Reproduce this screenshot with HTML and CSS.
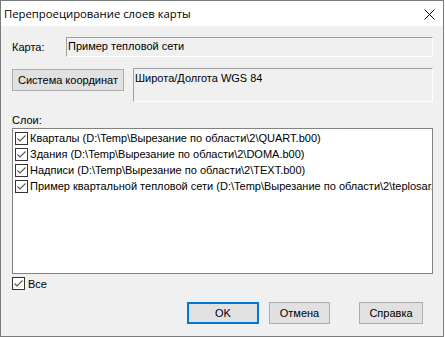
FILE: index.html
```html
<!DOCTYPE html>
<html lang="ru">
<head>
  <meta charset="UTF-8"/>
  <title>Перепроецирование слоев карты</title>
  <link rel="stylesheet" href="styles.css">
</head>
<body>
  <div class="win">
    <div class="titlebar">
      <span class="title">Перепроецирование слоев карты</span>
      <svg class="close" width="11" height="11" viewBox="0 0 11 11"><path d="M0.5 0.5L10.5 10.5M10.5 0.5L0.5 10.5" stroke="#000" stroke-width="1"/></svg>
    </div>
    <div class="content">
      <div class="row-map">
        <span class="lbl">Карта:</span>
        <div class="field">Пример тепловой сети</div>
      </div>
      <div class="row-cs">
        <button class="btn btn-cs">Система координат</button>
        <div class="field field-tall">Широта/Долгота WGS 84</div>
      </div>
      <div class="lbl-layers">Слои:</div>
      <div class="list">
        <div class="item"><span class="cb"><svg width="11" height="11" viewBox="0 0 11 11"><path d="M1.5 5.5L4 8L9.5 2.5" fill="none" stroke="#555" stroke-width="1.1"/></svg></span>Кварталы (D:\Temp\Вырезание по области\2\QUART.b00)</div>
        <div class="item"><span class="cb"><svg width="11" height="11" viewBox="0 0 11 11"><path d="M1.5 5.5L4 8L9.5 2.5" fill="none" stroke="#555" stroke-width="1.1"/></svg></span>Здания (D:\Temp\Вырезание по области\2\DOMA.b00)</div>
        <div class="item"><span class="cb"><svg width="11" height="11" viewBox="0 0 11 11"><path d="M1.5 5.5L4 8L9.5 2.5" fill="none" stroke="#555" stroke-width="1.1"/></svg></span>Надписи (D:\Temp\Вырезание по области\2\TEXT.b00)</div>
        <div class="item"><span class="cb"><svg width="11" height="11" viewBox="0 0 11 11"><path d="M1.5 5.5L4 8L9.5 2.5" fill="none" stroke="#555" stroke-width="1.1"/></svg></span>Пример квартальной тепловой сети (D:\Temp\Вырезание по области\2\teplosar.b00)</div>
      </div>
      <div class="all"><span class="cb"><svg width="11" height="11" viewBox="0 0 11 11"><path d="M1.5 5.5L4 8L9.5 2.5" fill="none" stroke="#555" stroke-width="1.1"/></svg></span>Все</div>
      <div class="buttons">
        <button class="btn btn-ok">OK</button>
        <button class="btn btn-cancel">Отмена</button>
        <button class="btn btn-help">Справка</button>
      </div>
    </div>
  </div>
</body>
</html>
```

FILE: styles.css
```css
body { margin:0; background:#fff; font-family:"Liberation Sans", Arial, sans-serif; font-size:11px; color:#000; }
.win { width:444px; height:337px; box-sizing:border-box; border:1px solid #7a7a7a; background:#f0f0f0; display:flex; flex-direction:column; }
.titlebar { height:25px; background:#fff; display:flex; align-items:center; justify-content:space-between; padding:0 8px 0 3px; flex-shrink:0; }
.title { font-family:"Open Sans", "Liberation Sans", sans-serif; font-size:11.3px; }
.close { margin-top:1px; }
.content { padding:0 10px 0 11px; display:flex; flex-direction:column; }
.row-map { display:flex; align-items:center; margin-top:11px; height:20px; }
.lbl { width:54px; }
.field { flex:1; box-sizing:border-box; height:20px; border:1px solid; border-color:#a0a0a0 #fff #fff #a0a0a0; padding:2px 0 0 1px; }
.row-cs { display:flex; align-items:flex-start; margin-top:11px; gap:9px; }
.field-tall { height:34px; padding-top:3px; }
.btn { font:inherit; color:#000; background:#e1e1e1; border:1px solid #adadad; height:22px; padding:0; box-sizing:border-box; }
.btn-cs { width:112px; margin-top:1px; }
.lbl-layers { margin-top:12px; height:14px; }
.list { box-sizing:border-box; height:146px; background:#fff; border:1px solid #828282; padding:1px 0 0 2px; overflow:hidden; white-space:nowrap; }
.item { height:16px; display:flex; align-items:center; }
.cb { width:13px; height:13px; box-sizing:border-box; border:1px solid #333; background:#fff; display:inline-flex; align-items:center; justify-content:center; margin-right:2px; flex-shrink:0; }
.all { display:flex; align-items:center; margin-top:3px; height:13px; }
.all .cb { margin-right:3px; }
.buttons { display:flex; justify-content:flex-end; margin-top:12px; padding-right:10px; }
.btn-ok { width:72px; border:2px solid #0078d7; }
.btn-cancel { width:61px; margin-left:10px; }
.btn-help { width:64px; margin-left:29px; }
```
